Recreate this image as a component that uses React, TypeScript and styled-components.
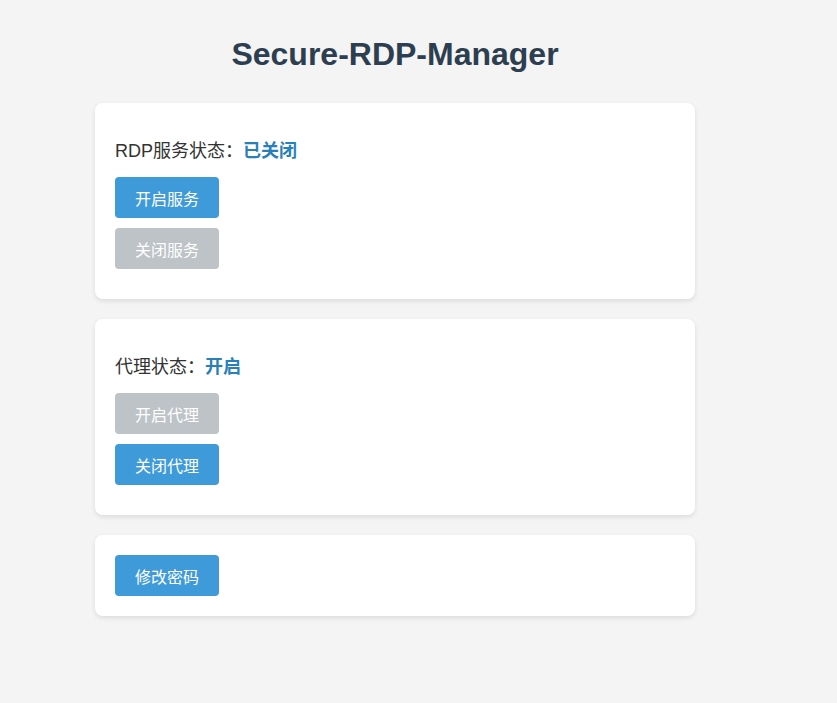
import React, { useState } from "react";
import styled, { createGlobalStyle } from "styled-components";

const GlobalStyle = createGlobalStyle`
  html, body {
    margin: 0;
    padding: 0;
    background: #f4f4f4;
  }
  body {
    font-family: "Liberation Sans", Arial, "Noto Sans CJK SC", sans-serif;
    color: #333;
  }
`;

const Page = styled.div`
  width: 600px;
  margin-left: 95px;
  padding-bottom: 40px;
  display: flex;
  flex-direction: column;
  gap: 20px;
`;

const Title = styled.h1`
  margin: 36px 0 10px;
  text-align: center;
  font-family: "Liberation Sans", Arial, sans-serif;
  font-size: 32px;
  font-weight: bold;
  line-height: 37px;
  color: #2c3e50;
`;

const Card = styled.section<{ $tail?: boolean }>`
  background: #ffffff;
  border-radius: 8px;
  box-shadow: 0 2px 5px rgba(0, 0, 0, 0.1);
  padding: 20px 20px ${(p) => (p.$tail ? "30px" : "20px")};
  display: flex;
  flex-direction: column;
  align-items: flex-start;
`;

const StatusLine = styled.p`
  margin: 16px 0 14px;
  font-size: 18px;
  line-height: 24px;
  color: #333;
`;

const StatusValue = styled.span`
  font-weight: bold;
  color: #2980b9;
`;

const ButtonStack = styled.div`
  display: flex;
  flex-direction: column;
  gap: 10px;
`;

const ActionButton = styled.button<{ $disabled?: boolean }>`
  width: 104px;
  height: 41px;
  padding: 0;
  border: none;
  border-radius: 4px;
  font-family: "Liberation Sans", Arial, "Noto Sans CJK SC", sans-serif;
  font-size: 16px;
  color: #ffffff;
  background: ${(p) => (p.$disabled ? "#bdc3c7" : "#3f9ad9")};
  cursor: ${(p) => (p.$disabled ? "not-allowed" : "pointer")};
`;

export default function App() {
  const [rdpOn, setRdpOn] = useState(false);
  const [proxyOn, setProxyOn] = useState(true);

  return (
    <>
      <GlobalStyle />
      <Page>
        <Title>Secure-RDP-Manager</Title>

        <Card $tail>
          <StatusLine>
            RDP服务状态：<StatusValue>{rdpOn ? "已开启" : "已关闭"}</StatusValue>
          </StatusLine>
          <ButtonStack>
            <ActionButton $disabled={rdpOn} onClick={() => setRdpOn(true)}>
              开启服务
            </ActionButton>
            <ActionButton $disabled={!rdpOn} onClick={() => setRdpOn(false)}>
              关闭服务
            </ActionButton>
          </ButtonStack>
        </Card>

        <Card $tail>
          <StatusLine>
            代理状态：<StatusValue>{proxyOn ? "开启" : "关闭"}</StatusValue>
          </StatusLine>
          <ButtonStack>
            <ActionButton $disabled={proxyOn} onClick={() => setProxyOn(true)}>
              开启代理
            </ActionButton>
            <ActionButton $disabled={!proxyOn} onClick={() => setProxyOn(false)}>
              关闭代理
            </ActionButton>
          </ButtonStack>
        </Card>

        <Card>
          <ActionButton>修改密码</ActionButton>
        </Card>
      </Page>
    </>
  );
}
